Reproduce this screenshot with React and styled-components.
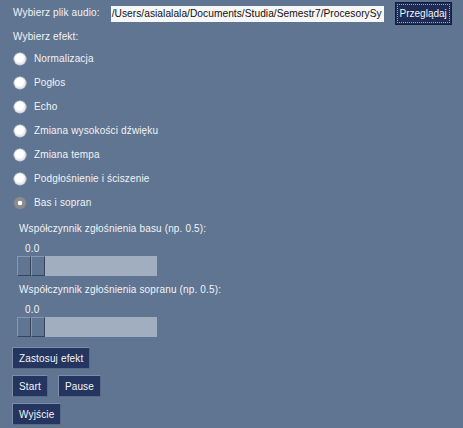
import React from "react";
import styled, { createGlobalStyle } from "styled-components";

const Global = createGlobalStyle`
  html, body { margin: 0; padding: 0; background: #5f7591; }
  body { font-family: "Liberation Sans", Arial, sans-serif; font-size: 10px; }
`;

const Page = styled.div`
  width: 463px;
  height: 428px;
  background: #5f7591;
  color: #f2f3f6;
  font-family: "Liberation Sans", Arial, sans-serif;
  font-size: 10px;
  letter-spacing: 0.15px;
  display: flex;
  flex-direction: column;
  overflow: hidden;
`;

const TopRow = styled.div`
  height: 25px;
  display: flex;
  align-items: center;
  padding-left: 13px;
`;

const Label = styled.span`
  line-height: 14px;
  white-space: nowrap;
`;

const PathField = styled.div`
  margin-left: 11px;
  width: 273px;
  height: 16px;
  margin-top: 2px;
  background: #f7f7f7;
  color: #111;
  font-size: 10.2px;
  line-height: 16px;
  padding-left: 1px;
  box-sizing: border-box;
  overflow: hidden;
  white-space: nowrap;
  letter-spacing: 0.04px;
`;

const BrowseButton = styled.button`
  margin-left: 11px;
  width: 57px;
  height: 23px;
  margin-top: 1px;
  padding: 0;
  box-sizing: border-box;
  display: flex;
  align-items: center;
  justify-content: center;
  background: #1e2c56;
  color: #f4f5f8;
  border: 1px solid #131d3c;
  outline: 1px dotted #9aa6c0;
  outline-offset: -3px;
  font-family: "Liberation Sans", Arial, sans-serif;
  font-size: 10px;
  letter-spacing: 0;
  white-space: nowrap;
`;

const SectionLabel = styled.div`
  height: 22px;
  padding-left: 13px;
  display: flex;
  align-items: center;
`;

const RadioList = styled.div`
  display: flex;
  flex-direction: column;
`;

const RadioRow = styled.div`
  height: 24px;
  display: flex;
  align-items: center;
  padding-left: 14px;
`;

const RadioDot = styled.span`
  width: 12px;
  height: 12px;
  border-radius: 50%;
  box-sizing: border-box;
  background: ${(p) =>
    p.$checked
      ? "radial-gradient(circle at 50% 50%, #ffffff 0 2px, #8b8b8d 2.6px)"
      : "radial-gradient(circle at 45% 40%, #ffffff 0 4px, #e6e6e8 6px)"};
  box-shadow: ${(p) => (p.$checked ? "0 0 0 0.5px #7a7a7c" : "0 0 0 0.5px #d8d8dc")};
  margin-right: 8px;
  flex: none;
`;

const SliderGroup = styled.div`
  display: flex;
  flex-direction: column;
`;

const SliderLabel = styled.div`
  margin-top: 7px;
  padding-left: 19px;
  line-height: 14px;
  white-space: nowrap;
`;

const SliderValue = styled.div`
  margin-top: 6px;
  padding-left: 25px;
  line-height: 14px;
`;

const Trough = styled.div`
  margin-left: 17px;
  width: 140px;
  height: 20px;
  background: #a0aec0;
  display: flex;
`;

const Handle = styled.span`
  width: 14px;
  height: 20px;
  box-sizing: border-box;
  background: #5f7591;
  border-top: 1px solid #8797ad;
  border-left: 1px solid #8797ad;
  border-right: 1px solid #36445c;
  border-bottom: 1px solid #36445c;
`;

const ButtonRow = styled.div`
  display: flex;
  gap: 10px;
  padding-left: 12px;
  margin-top: ${(p) => p.$top}px;
`;

const ActionButton = styled.button`
  height: 22px;
  padding: 0 6px;
  background: #24355f;
  color: #f4f5f8;
  border: 1px solid #7f8ca5;
  border-right-color: #5a6882;
  border-bottom-color: #5a6882;
  font-family: "Liberation Sans", Arial, sans-serif;
  font-size: 10px;
  letter-spacing: 0.15px;
  box-sizing: border-box;
  white-space: nowrap;
`;

const effects = [
  "Normalizacja",
  "Pogłos",
  "Echo",
  "Zmiana wysokości dźwięku",
  "Zmiana tempa",
  "Podgłośnienie i ściszenie",
  "Bas i sopran",
];

function Slider({ label }) {
  return (
    <SliderGroup>
      <SliderLabel>{label}</SliderLabel>
      <SliderValue>0.0</SliderValue>
      <Trough>
        <Handle />
        <Handle />
      </Trough>
    </SliderGroup>
  );
}

export default function App() {
  return (
    <>
      <Global />
      <Page>
        <TopRow>
          <Label>Wybierz plik audio:</Label>
          <PathField>/Users/asialalala/Documents/Studia/Semestr7/ProcesorySy</PathField>
          <BrowseButton>Przeglądaj</BrowseButton>
        </TopRow>
        <SectionLabel>Wybierz efekt:</SectionLabel>
        <RadioList>
          {effects.map((e) => (
            <RadioRow key={e}>
              <RadioDot $checked={e === "Bas i sopran"} />
              <Label>{e}</Label>
            </RadioRow>
          ))}
        </RadioList>
        <Slider label="Współczynnik zgłośnienia basu (np. 0.5):" />
        <Slider label="Współczynnik zgłośnienia sopranu (np. 0.5):" />
        <ButtonRow $top={10}>
          <ActionButton>Zastosuj efekt</ActionButton>
        </ButtonRow>
        <ButtonRow $top={6}>
          <ActionButton>Start</ActionButton>
          <ActionButton>Pause</ActionButton>
        </ButtonRow>
        <ButtonRow $top={6}>
          <ActionButton>Wyjście</ActionButton>
        </ButtonRow>
      </Page>
    </>
  );
}
